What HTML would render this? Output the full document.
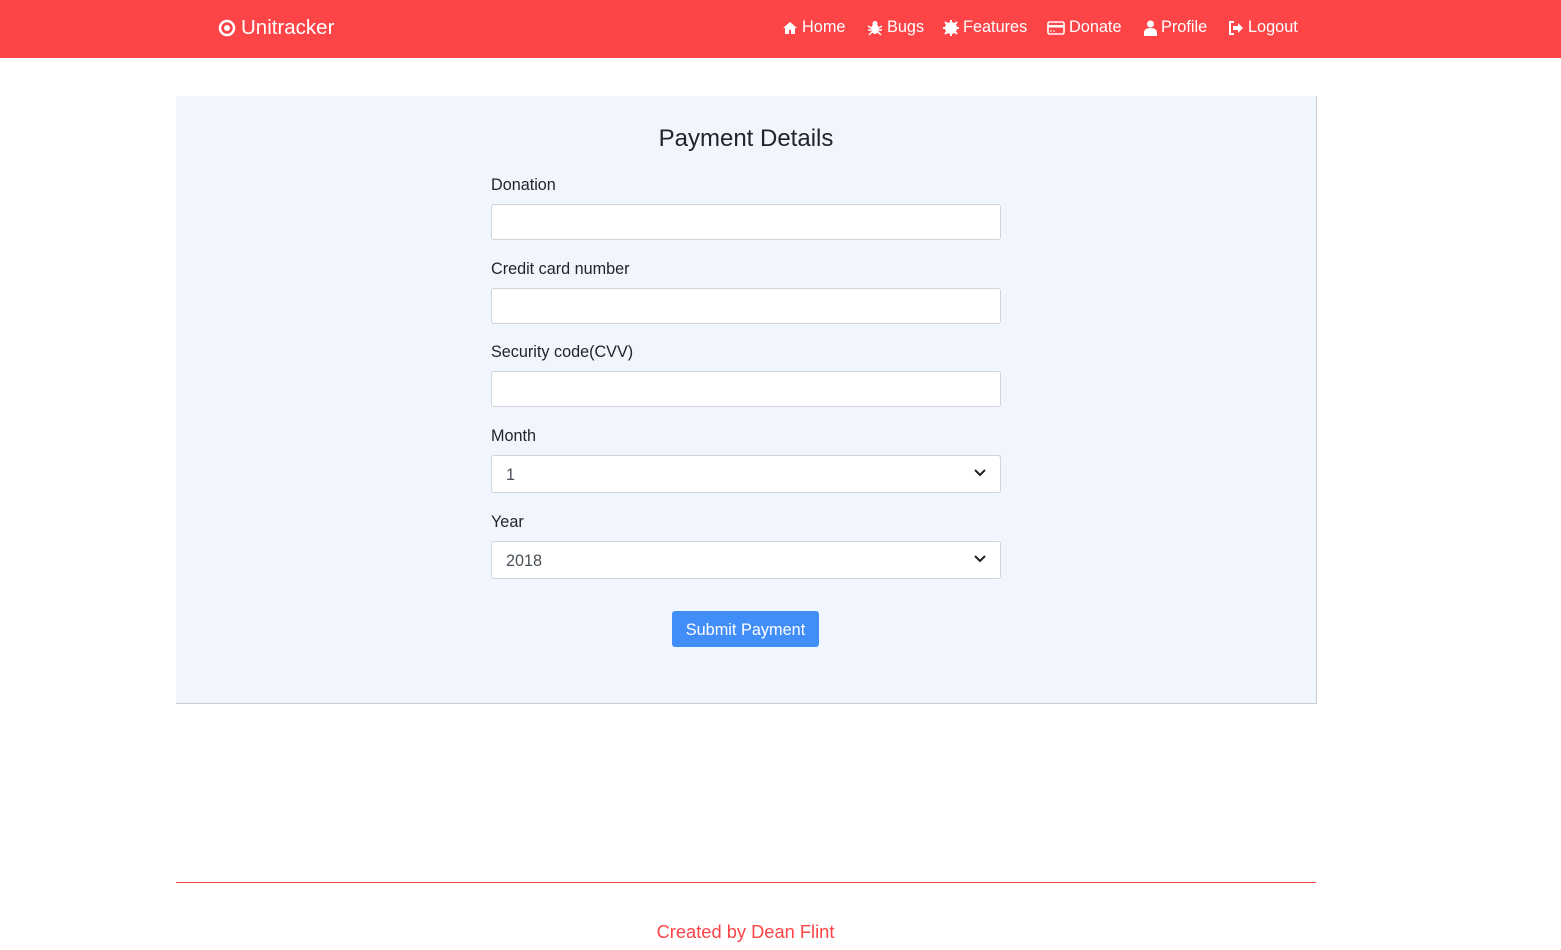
<!DOCTYPE html>
<html><head><meta charset="utf-8"><style>
*{box-sizing:border-box;margin:0;padding:0}
body{width:1561px;height:950px;background:#fff;font-family:"Liberation Sans",sans-serif;color:#212529;position:relative;overflow:hidden}
.nav{position:absolute;left:0;top:0;width:1561px;height:58px;background:#fd4447;color:#fff}
.brand{position:absolute;left:218px;top:16px;font-size:20.5px;display:flex;align-items:center;gap:5px}
.item{position:absolute;top:18px;font-size:16.3px;display:flex;align-items:center;gap:4px;white-space:nowrap}
.card{position:absolute;left:176px;top:96px;width:1141px;height:608px;background:#f1f6fe;border-right:1px solid #ccc;border-bottom:1px solid #ccc}
h2{position:absolute;left:0;width:1140px;top:125px;text-align:center;font-weight:normal;font-size:24px;color:#212529}
.lbl{position:absolute;left:491px;font-size:16.2px}
.inp{position:absolute;left:491px;width:510px;height:36px;background:#fff;border:1px solid #ced4da;border-radius:3px}
.sel{height:38px;font-size:16.2px;color:#495057;padding:10px 14px 0}
.sel svg{position:absolute;right:14px;top:12px}
.btn{position:absolute;left:672px;top:611px;width:147px;height:36px;background:#428ef8;color:#fff;border-radius:3px;font-size:16.3px;text-align:center;line-height:38px}
.hr{position:absolute;left:176px;top:882px;width:1140px;height:1px;background:#fd4447}
.foot{position:absolute;left:0;width:1491px;top:921px;text-align:center;color:#fd4447;font-size:18.3px}
</style></head><body>
<div class="nav">
<div class="brand"><svg width="18" height="18" viewBox="0 0 18 18"><circle cx="9" cy="9" r="7" fill="none" stroke="#fff" stroke-width="2.5"/><circle cx="9" cy="9" r="3" fill="#fff"/></svg>Unitracker</div>
<div class="item" style="left:782px"><svg width="16" height="14" viewBox="0 0 16 14"><path d="M8 1L1 7h2v6h4V9h2v4h4V7h2z" fill="#fff"/></svg>Home</div>
<div class="item" style="left:867px"><svg width="16" height="16" viewBox="0 0 16 16"><ellipse cx="8" cy="9" rx="4" ry="5" fill="#fff"/><circle cx="8" cy="3.5" r="2.5" fill="#fff"/><path d="M1 6l3 2M15 6l-3 2M1 10h3M15 10h-3M2 15l3-3M14 15l-3-3" stroke="#fff" stroke-width="1.5"/></svg>Bugs</div>
<div class="item" style="left:943px"><svg width="16" height="16" viewBox="0 0 16 16"><circle cx="8" cy="8" r="6" fill="#fff"/><path d="M8 0v16M0 8h16M2 2l12 12M14 2L2 14" stroke="#fff" stroke-width="2"/></svg>Features</div>
<div class="item" style="left:1047px"><svg width="18" height="14" viewBox="0 0 18 14"><rect x="1" y="1" width="16" height="12" rx="1.5" fill="none" stroke="#fff" stroke-width="1.6"/><rect x="1" y="4" width="16" height="2.5" fill="#fff"/><path d="M3 10h2M6 10h2" stroke="#fff"/></svg>Donate</div>
<div class="item" style="left:1144px"><svg width="13" height="16" viewBox="0 0 13 16"><circle cx="6.5" cy="4" r="3.5" fill="#fff"/><path d="M0 16v-3c0-3 2-5 6.5-5S13 10 13 13v3z" fill="#fff"/></svg>Profile</div>
<div class="item" style="left:1228px"><svg width="16" height="14" viewBox="0 0 16 14"><path d="M6 1H2v12h4" fill="none" stroke="#fff" stroke-width="2"/><path d="M5 5h5V2l5 5-5 5V9H5z" fill="#fff"/></svg>Logout</div>
</div>
<div class="card"></div>
<h2 style="left:176px">Payment Details</h2>
<div class="lbl" style="top:176px">Donation</div>
<div class="inp" style="top:204px"></div>
<div class="lbl" style="top:260px">Credit card number</div>
<div class="inp" style="top:288px"></div>
<div class="lbl" style="top:343px">Security code(CVV)</div>
<div class="inp" style="top:371px"></div>
<div class="lbl" style="top:427px">Month</div>
<div class="inp sel" style="top:455px">1<svg width="12" height="10" viewBox="0 0 12 10"><path d="M1 2l5 5 5-5" fill="none" stroke="#222" stroke-width="2"/></svg></div>
<div class="lbl" style="top:513px">Year</div>
<div class="inp sel" style="top:541px">2018<svg width="12" height="10" viewBox="0 0 12 10"><path d="M1 2l5 5 5-5" fill="none" stroke="#222" stroke-width="2"/></svg></div>
<div class="btn">Submit Payment</div>
<div class="hr"></div>
<div class="foot">Created by Dean Flint</div>
</body></html>
